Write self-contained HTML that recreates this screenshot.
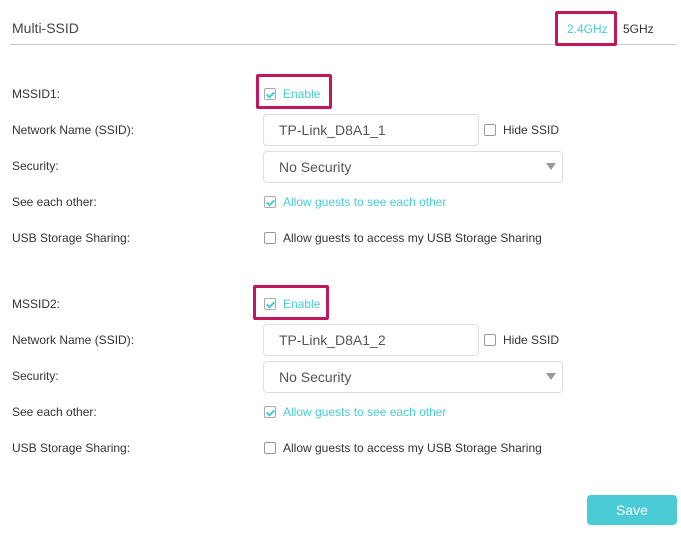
<!DOCTYPE html>
<html><head><style>
*{margin:0;padding:0;box-sizing:border-box}
body{width:681px;height:535px;background:#fff;font-family:"Liberation Sans",Arial,sans-serif;color:#333;position:relative;overflow:hidden}
.a{position:absolute;white-space:nowrap}
.lbl{font-size:12px;color:#333;left:12px}
.cb{position:absolute;width:12px;height:12px;border:1px solid #999;border-radius:2px;background:#fff}
.cb.on{border-color:#aaa}
.cb.on:after{content:"";position:absolute;left:3px;top:1px;width:3px;height:6px;border:solid #4acbd6;border-width:0 2px 2px 0;transform:rotate(45deg)}
.t{font-size:12px}
.teal{color:#4acbd6}
.inp{position:absolute;border:1px solid #ddd;border-radius:4px;background:#fff;font-size:14px;color:#555;padding-left:15px}
.hl{position:absolute;border:3px solid #c2185b;border-radius:2px}
.arrow{position:absolute;width:0;height:0;border-left:5px solid transparent;border-right:5px solid transparent;border-top:7px solid #999}
</style></head><body>
<div class="a" style="left:12px;top:20px;font-size:14px;color:#444">Multi-SSID</div>
<div class="a" style="left:10px;top:44px;width:667px;height:1px;background:#ccc"></div>
<div class="a teal" style="left:567px;top:22px;font-size:12px">2.4GHz</div>
<div class="hl" style="left:555px;top:11px;width:62px;height:35px"></div>
<div class="a" style="left:623px;top:22px;font-size:12px;color:#333">5GHz</div>

<!-- block 1 -->
<div class="a lbl" style="top:87px">MSSID1:</div>
<div class="cb on" style="left:264px;top:88px"></div>
<div class="a t teal" style="left:283px;top:87px">Enable</div>
<div class="hl" style="left:256px;top:74px;width:76px;height:35px"></div>

<div class="a lbl" style="top:123px">Network Name (SSID):</div>
<div class="inp" style="left:263px;top:114px;width:216px;height:32px;line-height:30px">TP-Link_D8A1_1</div>
<div class="cb" style="left:484px;top:124px"></div>
<div class="a t" style="left:503px;top:123px">Hide SSID</div>

<div class="a lbl" style="top:159px">Security:</div>
<div class="inp" style="left:263px;top:151px;width:300px;height:32px;line-height:30px">No Security</div>
<div class="arrow" style="left:546px;top:163px"></div>

<div class="a lbl" style="top:195px">See each other:</div>
<div class="cb on" style="left:264px;top:196px"></div>
<div class="a t teal" style="left:283px;top:195px">Allow guests to see each other</div>

<div class="a lbl" style="top:231px">USB Storage Sharing:</div>
<div class="cb" style="left:264px;top:232px"></div>
<div class="a t" style="left:283px;top:231px">Allow guests to access my USB Storage Sharing</div>

<!-- block 2 -->
<div class="a lbl" style="top:297px">MSSID2:</div>
<div class="cb on" style="left:264px;top:298px"></div>
<div class="a t teal" style="left:283px;top:297px">Enable</div>
<div class="hl" style="left:253px;top:285px;width:76px;height:35px"></div>

<div class="a lbl" style="top:333px">Network Name (SSID):</div>
<div class="inp" style="left:263px;top:324px;width:216px;height:32px;line-height:30px">TP-Link_D8A1_2</div>
<div class="cb" style="left:484px;top:334px"></div>
<div class="a t" style="left:503px;top:333px">Hide SSID</div>

<div class="a lbl" style="top:369px">Security:</div>
<div class="inp" style="left:263px;top:361px;width:300px;height:32px;line-height:30px">No Security</div>
<div class="arrow" style="left:546px;top:373px"></div>

<div class="a lbl" style="top:405px">See each other:</div>
<div class="cb on" style="left:264px;top:406px"></div>
<div class="a t teal" style="left:283px;top:405px">Allow guests to see each other</div>

<div class="a lbl" style="top:441px">USB Storage Sharing:</div>
<div class="cb" style="left:264px;top:442px"></div>
<div class="a t" style="left:283px;top:441px">Allow guests to access my USB Storage Sharing</div>

<div class="a" style="left:587px;top:495px;width:90px;height:30px;background:#4acbd6;border-radius:4px;color:#fff;font-size:14px;text-align:center;line-height:30px">Save</div>
</body></html>
